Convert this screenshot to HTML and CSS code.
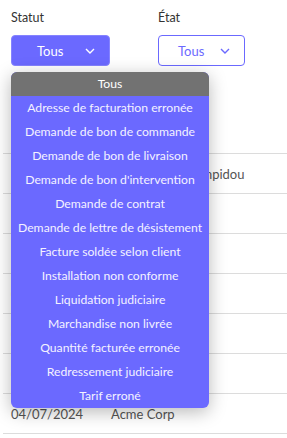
FILE: index.html
```html
<!DOCTYPE html>
<html lang="fr">
<head>
<meta charset="utf-8">
<link rel="stylesheet" href="styles.css">
</head>
<body>
<div class="page">
  <div class="filters">
    <div class="filter">
      <div class="label">Statut</div>
      <button class="select select-active">
        <span>Tous</span>
        <svg class="chev" width="10" height="6" viewBox="0 0 10 6"><path d="M1 1 L5 5 L9 1" fill="none" stroke="currentColor" stroke-width="1.4"/></svg>
      </button>
      <ul class="menu">
        <li class="menu-head">Tous</li>
        <li>Adresse de facturation erronée</li>
        <li>Demande de bon de commande</li>
        <li>Demande de bon de livraison</li>
        <li>Demande de bon d'intervention</li>
        <li>Demande de contrat</li>
        <li>Demande de lettre de désistement</li>
        <li>Facture soldée selon client</li>
        <li>Installation non conforme</li>
        <li>Liquidation judiciaire</li>
        <li>Marchandise non livrée</li>
        <li>Quantité facturée erronée</li>
        <li>Redressement judiciaire</li>
        <li>Tarif erroné</li>
      </ul>
    </div>
    <div class="filter">
      <div class="label">État</div>
      <button class="select select-outline">
        <span>Tous</span>
        <svg class="chev" width="10" height="6" viewBox="0 0 10 6"><path d="M1 1 L5 5 L9 1" fill="none" stroke="currentColor" stroke-width="1.4"/></svg>
      </button>
    </div>
  </div>
  <div class="table">
    <div class="row head"><span class="c1">Date</span><span class="c2">Client</span></div>
    <div class="row"><span class="c1">12/07/2024</span><span class="c2">Bibliothèque Pompidou</span></div>
    <div class="row"><span class="c1">11/07/2024</span><span class="c2">Acme Corp</span></div>
    <div class="row"><span class="c1">10/07/2024</span><span class="c2">Acme Corp</span></div>
    <div class="row"><span class="c1">09/07/2024</span><span class="c2">Acme Corp</span></div>
    <div class="row"><span class="c1">08/07/2024</span><span class="c2">Acme Corp</span></div>
    <div class="row"><span class="c1">05/07/2024</span><span class="c2">Acme Corp</span></div>
    <div class="row"><span class="c1">04/07/2024</span><span class="c2">Acme Corp</span></div>
  </div>
</div>
</body>
</html>
```
FILE: styles.css
```css
* { box-sizing: border-box; }
html, body { margin: 0; padding: 0; background: #fff; }
body { font-family: Lato, "Open Sans", sans-serif; font-size: 12px; color: #333; overflow: hidden; }
.page { padding: 10px 0 0 0; }
.filters { display: flex; gap: 48px; padding-left: 11px; }
.filter { position: relative; display: flex; flex-direction: column; gap: 9px; }
.label { font-size: 12.5px; line-height: 16px; color: #333; }
.select {
  display: flex; align-items: center; justify-content: space-between;
  height: 31px; border-radius: 4px; font-family: inherit; font-size: 13px;
  padding: 0 14px 0 25px; cursor: pointer;
}
.select-active { width: 99px; background: #6b69ff; border: 1px solid #8583ff; color: #fff; }
.select-outline { width: 87px; background: #fff; border: 1px solid #6b69ff; color: #6b69ff; padding-left: 19px; }
.chev { display: block; }
.menu {
  position: absolute; left: 0; top: 62px; width: 198px; margin: 0; padding: 0;
  list-style: none; background: #6b69ff; border-radius: 6px; overflow: hidden;
  box-shadow: 0 4px 18px rgba(0,0,0,0.28); z-index: 5;
}
.menu li { height: 24px; line-height: 24px; text-align: center; color: #f4f2ff; font-size: 12.2px; white-space: nowrap; }
.menu .menu-head { background: #727272; color: #fff; }
.table { margin-top: 48px; margin-left: 3px; }
.row { display: flex; align-items: center; height: 40px; border-bottom: 1px solid #dcdcdc; font-size: 13px; color: #555; }
.row.head { font-weight: 700; color: #333; }
.c1 { width: 108px; padding-left: 8px; }
.c2 { flex: 1; white-space: nowrap; }
```
